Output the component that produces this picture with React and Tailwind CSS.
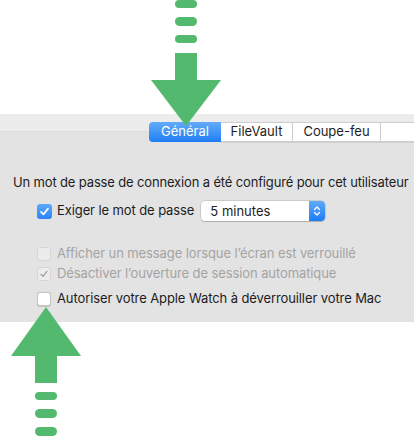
import React from "react";

const font = { fontFamily: '"Inter", "Liberation Sans", sans-serif' };

function Check({ checked, disabled, blue }) {
  if (blue) {
    return (
      <span className="flex h-[15px] w-[15px] items-center justify-center rounded-[3px] bg-gradient-to-b from-[#5ea8f9] to-[#2a84f6]">
        <svg width="11" height="11" viewBox="0 0 11 11">
          <path d="M2 5.8 L4.5 8.3 L9 2.6" fill="none" stroke="white" strokeWidth="1.7" strokeLinecap="round" strokeLinejoin="round" />
        </svg>
      </span>
    );
  }
  return (
    <span
      className={`flex h-[14px] w-[14px] items-center justify-center rounded-[3px] border ${
        disabled ? "border-[#d6d6d6] bg-[#ececec]" : "border-[#c4c4c4] bg-white shadow-[0_0.5px_1px_rgba(0,0,0,0.15)]"
      }`}
    >
      {checked && (
        <svg width="10" height="10" viewBox="0 0 10 10">
          <path d="M2 5.3 L4 7.4 L8 2.4" fill="none" stroke="#9b9b9b" strokeWidth="1.2" strokeLinecap="round" strokeLinejoin="round" />
        </svg>
      )}
    </span>
  );
}

function Row({ label, checked, disabled, className }) {
  return (
    <div className={`flex h-[20px] items-center pl-[37px] ${className || ""}`}>
      <Check checked={checked} disabled={disabled} />
      <span className={`ml-[6px] whitespace-nowrap text-[13px] tracking-[-0.1px] ${disabled ? "text-[#a3a3a3]" : "text-[#1d1d1d]"}`}>{label}</span>
    </div>
  );
}

export default function App() {
  return (
    <div className="relative h-[436px] w-[414px] overflow-hidden bg-white" style={font}>
      <div className="h-[114px]" />

      {/* panneau préférences */}
      <div className="h-[208px] bg-[#e3e3e3]">
        <div className="h-[18px] border-b border-[#dcdcdc] bg-[#ececec]" />
        <div className="-mt-[10px] flex h-[20px] pl-[149px]">
          <div className="flex w-[72px] items-center justify-center rounded-l-[4px] bg-gradient-to-b from-[#62abf9] to-[#1c7df5] text-[13px] text-white">
            Général
          </div>
          <div className="flex w-[72px] items-center justify-center border-y border-r border-[#cdcdcd] bg-white text-[13px] text-[#1d1d1d] shadow-[0_1px_0_rgba(0,0,0,0.08)]">
            FileVault
          </div>
          <div className="flex w-[88px] items-center justify-center border-y border-r border-[#cdcdcd] bg-white text-[13px] text-[#1d1d1d] shadow-[0_1px_0_rgba(0,0,0,0.08)]">
            Coupe-feu
          </div>
          <div className="flex-1 border-y border-[#cdcdcd] bg-white shadow-[0_1px_0_rgba(0,0,0,0.08)]" />
        </div>

        <div className="mt-[32px] whitespace-nowrap pl-[13px] text-[13px] leading-[16px] tracking-[-0.15px] text-[#1d1d1d]">
          Un mot de passe de connexion a été configuré pour cet utilisateur
        </div>

        <div className="mt-[11px] flex h-[20px] items-center pl-[37px]">
          <Check blue />
          <span className="ml-[5px] whitespace-nowrap text-[13px] tracking-[-0.1px] text-[#1d1d1d]">Exiger le mot de passe</span>
          <div className="ml-[7px] flex h-[20px] w-[124px] overflow-hidden rounded-[4px] bg-white shadow-[0_0_0_0.5px_rgba(0,0,0,0.2),0_1px_1px_rgba(0,0,0,0.15)]">
            <span className="flex-1 pl-[9px] text-[13px] leading-[20px] text-[#1d1d1d]">5 minutes</span>
            <span className="flex w-[16px] items-center justify-center bg-gradient-to-b from-[#5fa9f9] to-[#1b7cf5]">
              <svg width="8" height="12" viewBox="0 0 8 12">
                <path d="M1.5 4.5 L4 2 L6.5 4.5 M1.5 7.5 L4 10 L6.5 7.5" fill="none" stroke="white" strokeWidth="1.3" strokeLinecap="round" strokeLinejoin="round" />
              </svg>
            </span>
          </div>
        </div>

        <Row className="mt-[23px]" label="Afficher un message lorsque l’écran est verrouillé" disabled />
        <Row label="Désactiver l’ouverture de session automatique" disabled checked />
        <Row className="mt-[5px]" label="Autoriser votre Apple Watch à déverrouiller votre Mac" />
      </div>

      {/* flèche haut */}
      <svg className="absolute left-[151px] top-0" width="70" height="127" viewBox="0 0 70 127">
        <rect x="24" y="0" width="22" height="8" rx="4" fill="#52b96e" />
        <rect x="24" y="17" width="22" height="9" rx="4.5" fill="#52b96e" />
        <rect x="24" y="35" width="22" height="8" rx="4" fill="#52b96e" />
        <rect x="24" y="53" width="22" height="28" fill="#52b96e" />
        <path d="M0 80 L70 80 L35 126 Z" fill="#52b96e" />
      </svg>

      {/* flèche bas */}
      <svg className="absolute left-[11px] top-[307px]" width="70" height="129" viewBox="0 0 70 129">
        <path d="M35 0 L70 49 L0 49 Z" fill="#52b96e" />
        <rect x="24" y="48" width="22" height="28" fill="#52b96e" />
        <rect x="24" y="85" width="22" height="8" rx="4" fill="#52b96e" />
        <rect x="24" y="102" width="22" height="9" rx="4.5" fill="#52b96e" />
        <rect x="24" y="120" width="22" height="9" rx="4.5" fill="#52b96e" />
      </svg>
    </div>
  );
}
